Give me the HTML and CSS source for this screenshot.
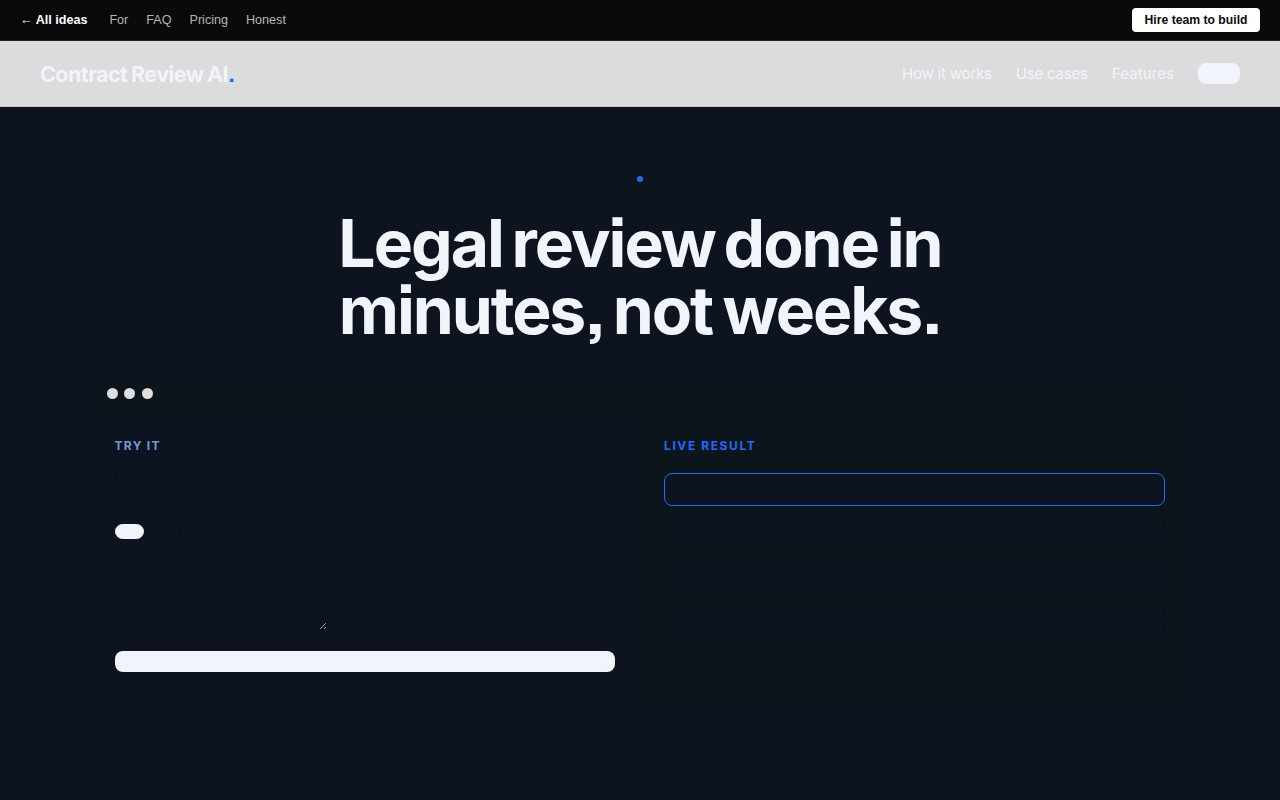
FILE: index.html
```html
<!DOCTYPE html>
<html lang="en">
<head>
    <meta charset="UTF-8">
    <meta name="viewport" content="width=device-width, initial-scale=1.0">
    <title>Contract Review AI</title>
    <link rel="stylesheet" href="styles.css">
</head>
<body>
    <div class="topbar">
        <a class="topbar-back" href="#">← All ideas</a>
        <div class="topbar-links">
            <a href="#">For</a>
            <a href="#">FAQ</a>
            <a href="#">Pricing</a>
            <a href="#">Honest</a>
        </div>
        <a class="topbar-hire" href="#">Hire team to build</a>
    </div>

    <nav class="nav">
        <a class="logo" href="#">Contract Review AI<span class="logo-dot">.</span></a>
        <div class="nav-links">
            <a class="link-how" href="#">How it works</a>
            <a class="link-cases" href="#">Use cases</a>
            <a class="link-features" href="#">Features</a>
            <a class="nav-cta" href="#"></a>
        </div>
    </nav>

    <section class="hero">
        <div class="badge"><span class="badge-dot"></span></div>
        <h1><span class="line-one">Legal review done in</span><span class="line-two">minutes, not weeks.</span></h1>

        <div class="demo">
            <div class="demo-bar"><i></i><i></i><i></i></div>
            <div class="demo-body">
                <div class="pane pane-input">
                    <div class="label label-try">Try it</div>
                    <div class="field"></div>
                    <div class="pills">
                        <span class="pill active"></span>
                        <span class="pill"></span>
                        <span class="pill"></span>
                    </div>
                    <textarea class="notes"></textarea>
                    <button class="run"></button>
                </div>
                <div class="pane pane-result">
                    <div class="label label-live">Live result</div>
                    <div class="results">
                        <div class="result current"></div>
                        <div class="result"></div>
                        <div class="result"></div>
                        <div class="result"></div>
                    </div>
                </div>
            </div>
        </div>
    </section>
</body>
</html>
```
FILE: styles.css
```css
* {
    box-sizing: border-box;
}
body {
    margin: 0;
    height: 100vh;
    overflow: hidden;
    background: #0d141f;
    color: #f1f4fa;
    font-family: Inter, sans-serif;
}
a {
    color: inherit;
    text-decoration: none;
}

/* top bar */
.topbar {
    display: flex;
    align-items: center;
    height: 41px;
    padding: 0 20px;
    background: #0a0a0a;
    border-bottom: 1px solid #222;
    font-family: "Liberation Sans", Arial, sans-serif;
    font-size: 12.6px;
    line-height: 15px;
}
.topbar-back {
    color: #fff;
    font-weight: bold;
}
.topbar-links {
    display: flex;
    gap: 18px;
    margin-left: 22px;
    color: #b5b5b5;
}
.topbar-hire {
    margin-left: auto;
    width: 128px;
    height: 24px;
    border-radius: 4px;
    background: #fff;
    color: #0a0a0a;
    font-size: 12.2px;
    font-weight: bold;
    line-height: 24px;
    text-align: center;
}

/* navigation */
.nav {
    display: flex;
    align-items: center;
    justify-content: space-between;
    height: 66px;
    padding: 0 40px;
    background: #dbdcde;
    border-bottom: 1px solid #c9cacc;
}
.logo {
    font-size: 21.5px;
    font-weight: 700;
    letter-spacing: -0.55px;
    word-spacing: -1px;
    font-optical-sizing: none;
    font-feature-settings: "ss07";
}
.logo-dot {
    color: #1f6bff;
}
.nav-links {
    display: flex;
    align-items: center;
    gap: 24px;
    font-size: 15px;
}
.link-how {
    letter-spacing: -0.2px;
}
.link-cases {
    letter-spacing: -0.2px;
}
.link-features {
    letter-spacing: 0.1px;
}
.nav-cta {
    width: 42px;
    height: 21px;
    border-radius: 8px;
    background: #f1f4fa;
}

/* hero */
.hero {
    display: flex;
    flex-direction: column;
    align-items: center;
    height: 605px;
    padding-top: 62px;
    overflow: hidden;
}
.badge {
    flex: none;
    display: flex;
    align-items: center;
    justify-content: center;
    width: 36px;
    height: 20px;
    border-radius: 10px;
    background: #0c151c;
}
.badge-dot {
    width: 6px;
    height: 6px;
    border-radius: 50%;
    background: #1f6bff;
}
h1 {
    display: flex;
    flex-direction: column;
    align-items: center;
    margin: 21px 0 31px;
    font-size: 66px;
    font-weight: 700;
    line-height: 67px;
    white-space: nowrap;
    font-optical-sizing: none;
    font-feature-settings: "ss07";
}
.line-one {
    letter-spacing: -2px;
    word-spacing: -5px;
}
.line-two {
    letter-spacing: -2.1px;
    word-spacing: -3px;
}

/* product demo */
.demo {
    display: flex;
    flex-direction: column;
    flex: none;
    width: 1098px;
    height: 420px;
    margin-right: -1px;
    border: 1px solid #0b111b;
    border-radius: 18px;
    background: #0d141f;
    box-shadow: 0 20px 60px rgba(0, 0, 0, 0.06);
    overflow: hidden;
}
.demo-bar {
    display: flex;
    align-items: center;
    gap: 6.5px;
    height: 36px;
    padding-left: 14px;
    background: #0c151b;
    border-bottom: 1px solid #0b111b;
}
.demo-bar i {
    width: 11px;
    height: 11px;
    border-radius: 50%;
    background: #dedede;
}
.demo-body {
    display: flex;
    flex: 1;
}
.pane-input {
    width: 546px;
    padding: 26px 23px 0 22px;
    border-right: 1px solid #0b111b;
}
.pane-result {
    flex: 1;
    padding: 26px 24px 0 25px;
    background: #0c151b;
}
.label {
    height: 15px;
    font-size: 12px;
    font-weight: 700;
    line-height: 15px;
    text-transform: uppercase;
}
.label-try {
    color: #7397d3;
    letter-spacing: 1.3px;
}
.label-live {
    padding-left: 0.5px;
    color: #1f6bff;
    letter-spacing: 1.6px;
}
.field {
    height: 42px;
    margin-top: 17px;
    border: 1px solid #0b111b;
    border-radius: 8px;
}
.pills {
    display: flex;
    gap: 8px;
    margin-top: 12px;
}
.pill {
    width: 29px;
    height: 15px;
    border: 1px solid #0b111b;
    border-radius: 8px;
}
.pill.active {
    background: #f1f4fa;
    border-color: #f1f4fa;
}
.notes {
    display: block;
    width: 213px;
    height: 80px;
    margin: 12px 0 20px;
    border: 1px solid #0b111b;
    border-radius: 8px;
    background: transparent;
}
.run {
    display: block;
    width: 100%;
    height: 21px;
    padding: 0;
    border: none;
    border-radius: 8px;
    background: #f1f4fa;
}
.results {
    display: flex;
    flex-direction: column;
    gap: 10.7px;
    margin-top: 20px;
}
.result {
    height: 33px;
    border: 1px solid #0b111b;
    border-radius: 8px;
    background: #0d141f;
}
.result.current {
    border-color: #1f6bff;
}
```
